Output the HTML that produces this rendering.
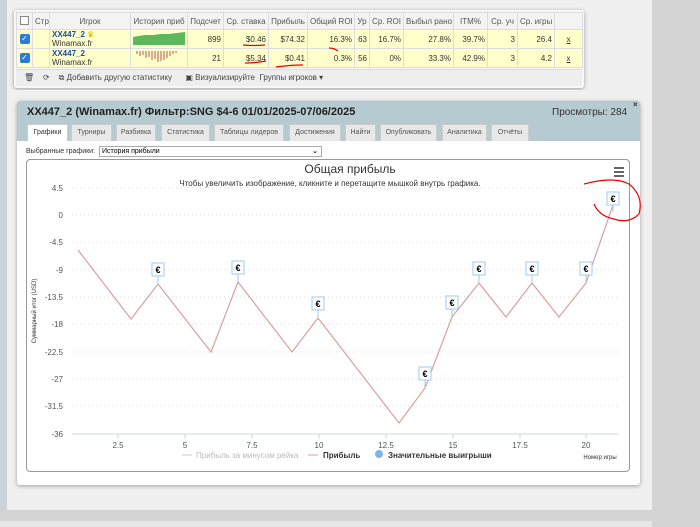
<!DOCTYPE html>
<html><head><meta charset="utf-8"><style>
*{margin:0;padding:0;box-sizing:border-box}
body{width:700px;height:527px;overflow:hidden;background:#f0f0f0;font-family:"Liberation Sans","DejaVu Sans",sans-serif;position:relative;font-size:8px;color:#333}
.a{position:absolute}
table{border-collapse:collapse;position:absolute;left:16px;top:12px;font-size:8px;table-layout:fixed;width:566px}
td,th{border:1px solid #ddd;height:19px;padding:0 2px;white-space:nowrap;overflow:hidden}
th{background:#f3f3f3;font-weight:normal;color:#555;height:17px}
tr.r td{background:#ffffcc;text-align:right}
.cb{width:10px;height:10px;border-radius:2px;background:#2a7dd6;display:inline-block;color:#fff;font-size:8px;line-height:10px;text-align:center}
.tab{position:absolute;top:124px;height:17px;background:#e8e8e8;border:1px solid #ccc;border-bottom:none;font-size:7px;color:#555;text-align:center;line-height:16px}
</style></head><body>
<div class="a" style="left:0;top:0;width:7px;height:527px;background:#c9d3da"></div>
<div class="a" style="left:652px;top:0;width:48px;height:527px;background:#d4d4d4"></div>
<div class="a" style="left:0;top:510px;width:700px;height:17px;background:#d4d4d4"></div>
<div class="a" style="left:0;top:521px;width:652px;height:6px;background:#e6e6e6"></div>

<div class="a" style="left:14px;top:10px;width:570px;height:78px;background:#f7f7f7;box-shadow:0 1px 4px rgba(0,0,0,.35);border-radius:3px"></div>
<table>
<colgroup><col style="width:16px"><col style="width:17px"><col style="width:81px"><col style="width:57px"><col style="width:36px"><col style="width:45px"><col style="width:39px"><col style="width:47px"><col style="width:15px"><col style="width:34px"><col style="width:50px"><col style="width:34px"><col style="width:30px"><col style="width:37px"><col style="width:28px"></colgroup>
<tr><th><span style="display:inline-block;width:9px;height:9px;border:1px solid #888;background:#fff"></span></th><th>Стр</th><th>Игрок</th><th>История приб</th><th>Подсчет</th><th>Ср. ставка</th><th>Прибыль</th><th>Общий ROI</th><th>Ур</th><th>Ср. ROI</th><th>Выбыл рано</th><th>ITM%</th><th>Ср. уч</th><th>Ср. игры</th><th></th></tr>
<tr class="r"><td style="text-align:center"><span class="cb">✓</span></td><td></td><td style="text-align:left;line-height:9px"><b style="color:#1a4f9c">XX447_2</b> <span style="color:#d4b000">♛</span><br>Winamax.fr</td><td style="text-align:left"><svg width="52" height="14"><path d="M0 14V6L6 5L12 4L20 4L28 3L36 3L44 2L52 1V14Z" fill="#5cb85c"/></svg></td><td>899</td><td>$0.46</td><td>$74.32</td><td>16.3%</td><td>63</td><td>16.7%</td><td>27.8%</td><td>39.7%</td><td>3</td><td>26.4</td><td style="text-align:center;text-decoration:underline">x</td></tr>
<tr class="r"><td style="text-align:center"><span class="cb">✓</span></td><td></td><td style="text-align:left;line-height:9px"><b style="color:#1a4f9c">XX447_2</b><br>Winamax.fr</td><td style="text-align:left"><svg width="52" height="14"><g stroke="#c0504d" stroke-width="1"><path d="M4 1V4M7 1V6M10 1V5M13 1V8M16 1V7M19 1V10M22 1V9M25 1V12M28 1V11M31 1V10M34 1V8M37 1V6M40 1V4M43 1V3"/></g></svg></td><td>21</td><td>$5.34</td><td>$0.41</td><td>0.3%</td><td>56</td><td>0%</td><td>33.3%</td><td>42.9%</td><td>3</td><td>4.2</td><td style="text-align:center;text-decoration:underline">x</td></tr>
</table>
<div class="a" style="left:16px;top:69px;width:566px;height:17px;background:#eee;border-top:1px solid #ddd;font-size:8px;color:#444;line-height:16px;padding-left:8px">🗑&nbsp;&nbsp;&nbsp; ⟳&nbsp;&nbsp;&nbsp; ⧉ Добавить другую статистику &nbsp;&nbsp;&nbsp;&nbsp; ▣ Визуализируйте &nbsp;Группы игроков ▾</div>

<div class="a" style="left:7px;top:90px;width:645px;height:420px;background:#f0f0f0"></div>
<div class="a" style="left:17px;top:101px;width:623px;height:384px;background:#fff;border-radius:3px;box-shadow:0 1px 4px rgba(0,0,0,.35)"></div>
<div class="a" style="left:17px;top:101px;width:623px;height:40px;background:#b5cad1;border-radius:3px 3px 0 0"></div>
<div class="a" style="left:27px;top:106px;font-size:11px;font-weight:bold;color:#222">XX447_2 (Winamax.fr) Фильтр:SNG $4-6 01/01/2025-07/06/2025</div>
<div class="a" style="left:552px;top:107px;font-size:10px;color:#333">Просмотры: 284</div>
<div class="a" style="left:633px;top:100px;font-size:8px;font-weight:bold">×</div>
<div class="tab" style="left:27px;width:41px;background:#fff;color:#333">Графики</div>
<div class="tab" style="left:71px;width:41px">Турниры</div>
<div class="tab" style="left:116px;width:40px">Разбивка</div>
<div class="tab" style="left:161px;width:49px">Статистика</div>
<div class="tab" style="left:214px;width:70px">Таблицы лидеров</div>
<div class="tab" style="left:289px;width:52px">Достижения</div>
<div class="tab" style="left:345px;width:31px">Найти</div>
<div class="tab" style="left:380px;width:57px">Опубликовать</div>
<div class="tab" style="left:442px;width:45px">Аналитика</div>
<div class="tab" style="left:491px;width:38px">Отчёты</div>
<div class="a" style="left:26px;top:148px;font-size:7px">Выбранные графики:</div>
<div class="a" style="left:99px;top:146px;width:223px;height:11px;border:1px solid #aaa;font-size:7px;line-height:9px;padding-left:2px;color:#000">История прибыли<span style="position:absolute;right:3px;font-weight:bold">⌄</span></div>
<div class="a" style="left:26px;top:159px;width:604px;height:313px;border:1px solid #999;border-radius:4px;background:#fff"></div>

<svg class="a" style="left:0;top:0" width="700" height="527" font-family="Liberation Sans, DejaVu Sans, sans-serif">
<defs>
<g id="e" stroke="#9ec8f0" fill="#fff" font-size="9" font-weight="bold"><path d="M0 -1v-7" /><rect x="-6" y="-21" width="12" height="13"/><text x="0" y="-11" text-anchor="middle" fill="#000" stroke="none">€</text></g>
</defs>
<text x="350" y="173" font-size="12" text-anchor="middle" fill="#333">Общая прибыль</text>
<text x="330" y="186" font-size="8" text-anchor="middle" fill="#333">Чтобы увеличить изображение, кликните и перетащите мышкой внутрь графика.</text>
<g stroke="#333" stroke-width="1.6"><path d="M614 168h10M614 172h10M614 176h10"/></g>
<g stroke="#ddd" stroke-dasharray="1,3">
<path d="M72 188H618M72 215H618M72 242H618M72 270H618M72 297H618M72 324H618M72 352H618M72 379H618M72 406H618"/></g>
<path d="M72 434H618" stroke="#ccd6eb"/>
<g stroke="#ccd6eb"><path d="M118 434v5M185 434v5M252 434v5M319 434v5M386 434v5M453 434v5M520 434v5M586 434v5"/></g>
<g font-size="8" fill="#555" text-anchor="end">
<text x="63" y="191">4.5</text><text x="63" y="218">0</text><text x="63" y="245">-4.5</text><text x="63" y="273">-9</text><text x="63" y="300">-13.5</text><text x="63" y="327">-18</text><text x="63" y="355">-22.5</text><text x="63" y="382">-27</text><text x="63" y="409">-31.5</text><text x="63" y="437">-36</text></g>
<g font-size="8" fill="#555" text-anchor="middle">
<text x="118" y="448">2.5</text><text x="185" y="448">5</text><text x="252" y="448">7.5</text><text x="319" y="448">10</text><text x="386" y="448">12.5</text><text x="453" y="448">15</text><text x="520" y="448">17.5</text><text x="586" y="448">20</text></g>
<text x="36" y="311" font-size="6" fill="#333" text-anchor="middle" transform="rotate(-90 36 311)">Суммарный итог (USD)</text>
<text x="600" y="459" font-size="6" fill="#333" text-anchor="middle">Номер игры</text>
<path d="M78 250L131 319L158 284L211 352L238 282L292 352L318 318L399 423L425 388L452 317L479 283L506 317L532 283L559 317L586 283L613 205" fill="none" stroke="#d9a0a0" stroke-width="1.2"/>
<use href="#e" x="158" y="284"/><use href="#e" x="238" y="282"/><use href="#e" x="318" y="318"/><use href="#e" x="425" y="388"/><use href="#e" x="452" y="317"/><use href="#e" x="479" y="283"/><use href="#e" x="532" y="283"/><use href="#e" x="586" y="283"/><use href="#e" x="613" y="213"/>
<path d="M182 455h10" stroke="#ccc"/><text x="196" y="458" font-size="8" fill="#bbb">Прибыль за минусом рейка</text>
<path d="M308 455h10" stroke="#d9a0a0"/><text x="323" y="458" font-size="8" fill="#333" font-weight="bold">Прибыль</text>
<circle cx="379" cy="454" r="4" fill="#7cb5ec"/><text x="388" y="458" font-size="8" fill="#333" font-weight="bold">Значительные выигрыши</text>
<g fill="none" stroke="#e00" stroke-width="1.2">
<path d="M243 45q11 1 22 0M329 48q5 0 9 3M245 63q10 0 21-2M276 67q14-2 27-2"/>
<path d="M584 184q30-8 45 0q15 12 10 30q-10 10-25 5q-15-3-20-15"/>
</g>
</svg>
</body></html>
